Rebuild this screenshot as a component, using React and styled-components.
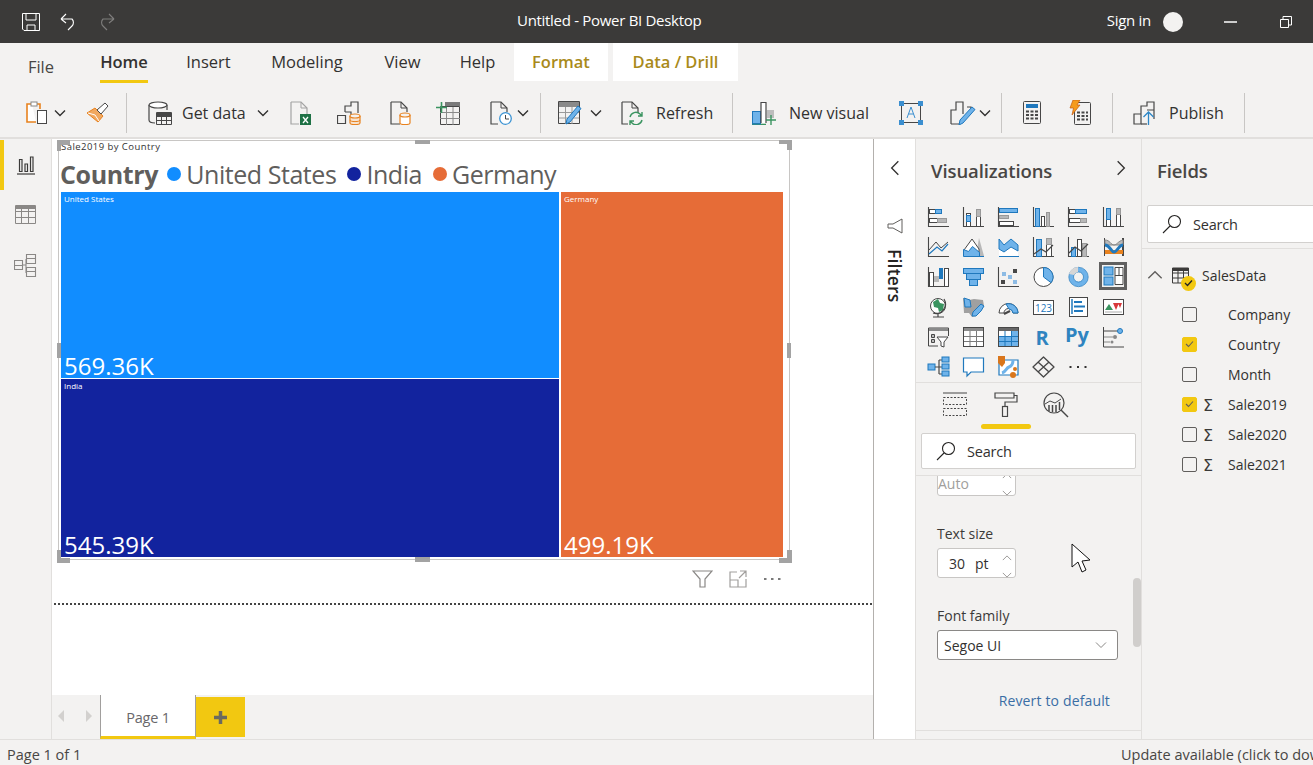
import React from 'react';
import styled, { createGlobalStyle } from 'styled-components';

const D = '#474747';
const B = '#1f78bd';
const L = '#6fb3ea';
const G = '#b8b8b8';
const O = '#e8821e';
const font = '"Open Sans", "Noto Sans", sans-serif';

const GlobalStyle = createGlobalStyle`
	html, body { margin: 0; padding: 0; background: #fff; overflow: hidden; }
	body { font-family: ${font}; color: #252423; }
	* { box-sizing: border-box; }
`;

const Page = styled.div`
	width: 1313px;
	height: 765px;
	display: flex;
	flex-direction: column;
	overflow: hidden;
`;

const TitleBar = styled.header`
	height: 43px;
	flex: none;
	background: #3b3a39;
	display: flex;
	align-items: center;
	color: #fff;
	font-size: 15px;
	letter-spacing: -0.3px;
`;
const QuickIcons = styled.div`
	width: 517px;
	padding-left: 22px;
	display: flex;
	align-items: center;
	gap: 20px;
`;
const TitleText = styled.span`
	padding-bottom: 3px;
`;
const SignIn = styled(TitleText)`
	margin-left: auto;
`;
const Avatar = styled.span`
	width: 20px;
	height: 20px;
	border-radius: 50%;
	background: #f3f2f1;
	margin-left: 12px;
`;
const WindowControls = styled.div`
	display: flex;
	align-items: center;
	gap: 43px;
	margin: 0 21px 0 41px;
`;

const TabRow = styled.nav`
	height: 40px;
	flex: none;
	background: #f3f2f1;
	display: flex;
	align-items: flex-start;
	padding-left: 28px;
	font-size: 16.5px;
`;
const Tab = styled.div`
	width: ${p => p.$w}px;
	margin-left: ${p => p.$ml}px;
	height: ${p => (p.$active ? 40 : 38)}px;
	padding-top: ${p => (p.$low ? 11 : 6)}px;
	display: flex;
	justify-content: center;
	white-space: nowrap;
	line-height: 26px;
	color: ${p => (p.$contextual ? '#a98a1a' : p.$low ? '#484644' : '#323130')};
	font-weight: ${p => (p.$contextual || p.$active ? 600 : 400)};
	background: ${p => (p.$contextual ? '#fff' : 'transparent')};
	border-bottom: ${p => (p.$active ? '3px solid #f2c811' : 'none')};
`;

const Ribbon = styled.div`
	height: 56px;
	flex: none;
	background: #f3f2f1;
	border-bottom: 2px solid #e1dfdd;
	display: flex;
	align-items: center;
	padding: 5px 0 0 26px;
`;
const Slot = styled.span`
	display: flex;
	flex: none;
	margin-left: ${p => p.$ml || 0}px;
`;
const RibbonLabel = styled.span`
	flex: none;
	width: ${p => p.$w}px;
	margin-left: ${p => p.$ml}px;
	white-space: nowrap;
	font-size: 16px;
	color: #323130;
`;
const Separator = styled.span`
	flex: none;
	width: 1px;
	height: 40px;
	margin-left: ${p => p.$ml}px;
	background: #c8c6c4;
`;

const Main = styled.main`
	flex: 1;
	display: flex;
	min-height: 0;
`;

const Rail = styled.aside`
	width: 52px;
	flex: none;
	padding-top: 1px;
	background: #f3f2f1;
	border-right: 1px solid #e1dfdd;
`;
const RailItem = styled.div`
	height: 50px;
	display: flex;
	align-items: center;
	justify-content: center;
	box-shadow: ${p => (p.$active ? 'inset 4px 0 0 #f2c811' : 'none')};
`;

const Center = styled.section`
	width: 821px;
	flex: none;
	display: flex;
	flex-direction: column;
`;
const Canvas = styled.div`
	flex: 1;
	background: #fff;
	padding: 1px 0 0 6px;
`;
const VisualFrame = styled.div`
	position: relative;
	width: 732px;
	height: 420px;
	border: 1px solid #c8c6c4;
	padding: 0 6px 2px 2px;
	display: flex;
	flex-direction: column;
`;
const VisualTitle = styled.div`
	height: 12px;
	font-size: 9.5px;
	line-height: 12px;
	color: #333;
	letter-spacing: 0.45px;
`;
const Legend = styled.div`
	height: 39px;
	padding-top: 3px;
	display: flex;
	align-items: center;
	color: #605e5c;
	font-size: 25px;
	letter-spacing: -0.45px;
	white-space: nowrap;
`;
const LegendTitle = styled.b`
	font-weight: 700;
	margin-right: 9px;
	margin-left: -1px;
	letter-spacing: -0.35px;
`;
const LegendDot = styled.i`
	width: 14px;
	height: 14px;
	border-radius: 50%;
	background: ${p => p.$color};
	margin-right: 5px;
`;
const LegendName = styled.span`
	margin-right: 11px;
`;
const Treemap = styled.div`
	flex: 1;
	display: grid;
	grid-template-columns: 498px 222px;
	grid-template-rows: 186px 178px;
	column-gap: 2px;
	row-gap: 1px;
`;
const Cell = styled.div`
	grid-column: ${p => p.$col};
	grid-row: ${p => p.$row};
	background: ${p => p.$color};
	color: #fff;
	padding: 2px 3px 0;
	display: flex;
	flex-direction: column;
	justify-content: space-between;
`;
const CellName = styled.span`
	font-size: 8px;
	line-height: 10px;
`;
const CellValue = styled.span`
	font-size: 24px;
	line-height: 24px;
`;
const Handle = styled.span`
	position: absolute;
	background: #a3a3a3;
	width: ${p => p.$w}px;
	height: ${p => p.$h}px;
	left: ${p => p.$x}px;
	top: ${p => p.$y}px;
`;
const VisualActions = styled.div`
	width: 724px;
	height: 18px;
	margin-top: 10px;
	display: flex;
	align-items: center;
	justify-content: flex-end;
	gap: 16px;
`;
const DottedLine = styled.div`
	margin: 15px 0 0 -4px;
	width: 818px;
	border-top: 2px dotted #444;
`;

const PageBar = styled.div`
	height: 44px;
	flex: none;
	background: #f3f2f1;
	display: flex;
	align-items: flex-start;
`;
const PageArrows = styled.div`
	width: 48px;
	flex: none;
	display: flex;
	gap: 22px;
	padding: 15px 0 0 6px;
`;
const PageTab = styled.div`
	width: 96px;
	height: 44px;
	background: #fff;
	border-left: 1px solid #a19f9d;
	border-right: 1px solid #a19f9d;
	border-bottom: 3px solid #f2c811;
	text-align: center;
	font-size: 14.5px;
	letter-spacing: -0.2px;
	line-height: 45px;
	color: #69676a;
`;
const AddPage = styled.div`
	width: 49px;
	height: 40px;
	margin-top: 2px;
	background: #f2c811;
	display: flex;
	align-items: center;
	justify-content: center;
`;

const FilterStrip = styled.aside`
	width: 42px;
	flex: none;
	background: #fff;
	border-left: 1px solid #b3b0ad;
	display: flex;
	flex-direction: column;
	align-items: center;
	padding-top: 21px;
`;
const FilterFunnel = styled.span`
	display: flex;
	margin-top: 42px;
`;
const FilterLabel = styled.span`
	writing-mode: vertical-rl;
	font-weight: 600;
	font-size: 17.5px;
	line-height: 18px;
	letter-spacing: 0.2px;
	margin-top: 15px;
	color: #252423;
`;

const VizPanel = styled.section`
	width: 227px;
	flex: none;
	background: #f3f2f1;
	border-left: 1px solid #e1dfdd;
	border-right: 1px solid #e1dfdd;
	display: flex;
	flex-direction: column;
	position: relative;
`;
const PanelHead = styled.div`
	height: 68px;
	flex: none;
	padding: 18px 12px 0 15px;
	display: flex;
	justify-content: space-between;
	align-items: flex-start;
	font-size: 18.5px;
	line-height: 28px;
	letter-spacing: -0.1px;
	font-weight: 600;
	color: #484644;
`;
const HeadChevron = styled.span`
	display: flex;
	margin-top: 3px;
`;
const VizGrid = styled.div`
	display: grid;
	grid-template-columns: repeat(6, 35px);
	grid-auto-rows: 20px;
	row-gap: 10px;
	padding-left: 12px;
	height: 176px;
	border-bottom: 1px solid #e1dfdd;
`;
const PaneTabs = styled.div`
	height: 50px;
	flex: none;
	display: flex;
	align-items: flex-start;
	padding: 9px 0 0 26px;
	position: relative;
`;
const PaneTab = styled.div`
	width: ${p => p.$w}px;
	margin-left: ${p => p.$ml || 0}px;
	display: flex;
	justify-content: center;
`;
const PaneUnderline = styled.span`
	position: absolute;
	left: 65px;
	top: 41px;
	width: 50px;
	height: 5px;
	border-radius: 3px;
	background: #f2c811;
`;
const SearchBox = styled.div`
	height: ${p => p.$h}px;
	width: ${p => p.$w}px;
	margin-left: ${p => p.$ml}px;
	flex: none;
	background: #fff;
	border: 1px solid #d2d0ce;
	border-radius: 2px;
	display: flex;
	align-items: center;
	padding-left: 14px;
	gap: 11px;
	font-size: 14.5px;
	letter-spacing: -0.2px;
	color: #323130;
`;
const FormatBody = styled.div`
	flex: 1;
	margin-top: 6px;
	border-top: 1px solid #e1dfdd;
	overflow: hidden;
`;
const FormatSection = styled.div`
	padding: 0 0 0 21px;
	height: 265px;
	border-bottom: 1px solid #e1dfdd;
`;
const Spinner = styled.div`
	width: 79px;
	height: 30px;
	margin-top: ${p => p.$mt}px;
	background: #fff;
	border: 1px solid #c8c6c4;
	border-radius: 3px;
	display: flex;
	align-items: center;
	position: relative;
	font-size: 14px;
	padding-left: ${p => (p.$muted ? 0 : 11)}px;
	padding-top: ${p => (p.$muted ? 5 : 0)}px;
	color: ${p => (p.$muted ? '#a19f9d' : '#323130')};
	gap: 10px;
`;
const SpinArrows = styled.span`
	position: absolute;
	right: 3px;
	top: 4px;
	display: flex;
	flex-direction: column;
	gap: 7px;
`;
const FieldLabel = styled.div`
	height: 20px;
	margin-top: 28px;
	font-size: 14px;
	line-height: 20px;
	color: #3b3a39;
`;
const SelectBox = styled.div`
	width: 181px;
	height: 30px;
	margin-top: 4px;
	background: #fff;
	border: 1px solid #8a8886;
	border-radius: 3px;
	display: flex;
	align-items: center;
	justify-content: space-between;
	padding: 0 10px 0 6px;
	font-size: 14px;
	color: #323130;
`;
const RevertLink = styled.div`
	width: 173px;
	height: 20px;
	margin-top: 31px;
	text-align: right;
	font-size: 14px;
	line-height: 20px;
	letter-spacing: 0.15px;
	color: #3a6ea5;
`;
const ScrollThumb = styled.span`
	position: absolute;
	left: 217px;
	top: 439px;
	width: 8px;
	height: 69px;
	border-radius: 4px;
	background: #d0cecc;
`;
const PointerIcon = styled.svg`
	position: absolute;
	left: 155px;
	top: 404px;
`;

const FieldsPanel = styled.section`
	flex: 1;
	min-width: 0;
	background: #f3f2f1;
	overflow: hidden;
	display: flex;
	flex-direction: column;
`;
const FieldsHead = styled(PanelHead)`
	padding-left: 15px;
	height: 66px;
`;
const FieldsRule = styled.div`
	margin-top: 5px;
	border-top: 1px solid #e1dfdd;
`;
const TableRow = styled.div`
	height: 30px;
	margin: 11px 0 9px;
	display: flex;
	align-items: center;
	padding-left: 5px;
	font-size: 14px;
	color: #323130;
`;
const TableBadge = styled.span`
	position: relative;
	display: flex;
	margin: 0 13px 0 9px;
`;
const TableTick = styled.span`
	position: absolute;
	left: 9px;
	top: 9px;
	width: 15px;
	height: 15px;
	border-radius: 50%;
	background: #f2c811;
	display: flex;
	align-items: center;
	justify-content: center;
`;
const FieldRow = styled.div`
	height: 30px;
	display: flex;
	align-items: center;
	padding-left: 40px;
	font-size: 14px;
	color: #323130;
`;
const Check = styled.span`
	width: 15px;
	height: 15px;
	flex: none;
	border-radius: 2px;
	border: 1px solid ${p => (p.$on ? '#f2c811' : '#605e5c')};
	background: ${p => (p.$on ? '#f2c811' : 'transparent')};
	display: flex;
	align-items: center;
	justify-content: center;
`;
const SigmaSlot = styled.span`
	width: 31px;
	padding: 3px 0 0 6px;
	flex: none;
	font-size: 16px;
	font-family: "DejaVu Sans", sans-serif;
	color: #3b3a39;
`;

const StatusBar = styled.footer`
	height: 26px;
	flex: none;
	background: #f3f2f1;
	border-top: 1px solid #e1dfdd;
	padding-top: 3px;
	display: flex;
	align-items: center;
	font-size: 14.5px;
	color: #484644;
	white-space: nowrap;
`;
const StatusLeft = styled.span`
	width: 1121px;
	flex: none;
	padding-left: 7px;
`;

const Chevron = ({ dir = 'down', size = 12, color = '#323130', w = 1.4 }) => {
	const paths = {
		down: 'M1 3.5 6 8.5 11 3.5',
		up: 'M1 8.5 6 3.5 11 8.5',
		left: 'M8.5 1 3.5 6 8.5 11',
		right: 'M3.5 1 8.5 6 3.5 11',
	};
	return (
		<svg width={size} height={size} viewBox="0 0 12 12" fill="none">
			<path d={paths[dir]} stroke={color} strokeWidth={w} />
		</svg>
	);
};

const Magnifier = () =>
	<svg width="20" height="20" viewBox="0 0 20 20" fill="none" stroke="#252423" strokeWidth="1.1">
		<circle cx="12.5" cy="7.5" r="6" />
		<path d="M8 12 1 19" />
	</svg>;

const Svg = ({ w, h, children }) =>
	<svg width={w} height={h} viewBox={`0 0 ${w} ${h}`} fill="none">
		{children}
	</svg>;

// ribbon drawings, each one in its own pixel box
const ribbon = {
	clipboard:
		<Svg w={21} h={23}>
			<path d="M6 3H1v18h9" stroke={O} strokeWidth="1.6" fill="#fff" />
			<path d="M14 8V3H9" stroke={O} strokeWidth="1.6" />
			<rect x="5" y="1" width="6" height="4" fill="#fff" stroke="#888" />
			<rect x="11.5" y="9.5" width="9" height="13" fill="#fff" stroke={D} />
		</Svg>,
	brush:
		<Svg w={23} h={21}>
			<path d="M1 11 9 6l8 8-5 6Z" fill="#f0a860" stroke={O} />
			<path d="M2 11l7 2 4 6" stroke="#fff" />
			<path d="m11 8 8-7 3 3-7 8Z" fill="#fff" stroke={D} />
		</Svg>,
	database:
		<Svg w={25} h={24}>
			<path d="M1 4v15c0 2 3 3 6 3M19 4v5" stroke={D} strokeWidth="1.2" />
			<ellipse cx="10" cy="4" rx="9" ry="3" stroke={D} strokeWidth="1.2" fill="#fff" />
			<path d="M8.5 11.5h15v12h-15Zm0 4h15m-15 4h15m-10-8v12m5-12v12" stroke={D} fill="#f3f2f1" />
			<rect x="9" y="12" width="14" height="3" fill={D} />
		</Svg>,
	excel:
		<Svg w={21} h={24}>
			<path d="M1 1h10l6 6v11M1 1v22h8" stroke="#a3a3a3" strokeWidth="1.2" />
			<path d="M11 1v6h6" stroke="#a3a3a3" />
			<rect x="10" y="13" width="11" height="11" fill="#1e7145" />
			<path d="m13 16 5 6m0-6-5 6" stroke="#fff" strokeWidth="1.3" />
		</Svg>,
	datasets:
		<Svg w={24} h={24}>
			<path d="M8 11V5h6V1h7v11M.5 14.5h8v8h-8Z" stroke={D} strokeWidth="1.2" fill="#f3f2f1" />
			<path d="M8 11h6v3" stroke={D} strokeWidth="1.2" />
			<path d="M13 15v7c0 1 2 1.6 5 1.6s5-.6 5-1.6v-7" stroke={O} strokeWidth="1.2" fill="#f8e3cf" />
			<ellipse cx="18" cy="15" rx="5" ry="2" stroke={O} strokeWidth="1.2" fill="#f3f2f1" />
			<path d="M13 19c0 1 2 1.6 5 1.6s5-.6 5-1.6" stroke={O} />
		</Svg>,
	docCylinder:
		<Svg w={21} h={24}>
			<path d="M1 1h10l6 6v4M1 1v22h9" stroke={D} strokeWidth="1.2" />
			<path d="M11 1v6h6" stroke={D} />
			<path d="M10 14v8c0 1 2 1.6 5 1.6s5-.6 5-1.6v-8" stroke={O} strokeWidth="1.2" fill="#fff" />
			<ellipse cx="15" cy="14" rx="5" ry="2" stroke={O} strokeWidth="1.2" fill="#f3f2f1" />
		</Svg>,
	tablePlus:
		<Svg w={24} h={24}>
			<path d="M4.500 5.500h19v18h-19Z" stroke={D} fill="#f3f2f1" />
			<path d="M9 1h15v4H9Z" fill="#7a7a7a" />
			<path d="M4 11.500h20M4 17.500h20M10.500 6v18M17 6v18" stroke="#8a8a8a" />
			<path d="M0 6.500h11M5.500 1v11" stroke="#3a9460" strokeWidth="1.6" />
		</Svg>,
	docClock:
		<Svg w={22} h={24}>
			<path d="M1 1h10l6 6v4M1 1v22h7" stroke={D} strokeWidth="1.2" />
			<path d="M11 1v6h6" stroke={D} />
			<circle cx="15.500" cy="17.500" r="5.800" stroke="#3b93d3" strokeWidth="1.3" fill="#fff" />
			<path d="M15.500 14v4h3.500" stroke={D} />
		</Svg>,
	tablePencil:
		<Svg w={24} h={24}>
			<path d="M.5.500h21v22H.5Z" stroke={D} fill="#f3f2f1" />
			<rect x="1" y="1" width="20" height="5" fill="#8a8a8a" />
			<path d="M1 11.500h20M1 17h20M7.500 6v17M14 6v17" stroke="#9a9a9a" />
			<path d="m8 23 1-5L20 5l3 2.500L12 21Z" fill="#6fb3ea" stroke="#1f78bd" />
		</Svg>,
	docRefresh:
		<Svg w={23} h={24}>
			<path d="M1 1h10l6 6v5M1 1v22h6" stroke={D} strokeWidth="1.2" />
			<path d="M11 1v6h6" stroke={D} />
			<path d="M9 16a6 6 0 0 1 10-3l2 2m0-4v4h-4" stroke="#3a9460" strokeWidth="1.4" />
			<path d="M21 19a6 6 0 0 1-10 3l-2-2m0 4v-4h4" stroke="#3a9460" strokeWidth="1.4" />
		</Svg>,
	newVisual:
		<Svg w={25} h={24}>
			<rect x=".5" y="10.500" width="8" height="12" fill="#6fb3ea" stroke="#1f78bd" />
			<path d="M9 22V1.500h5V22" stroke={D} strokeWidth="1.2" fill="#fff" />
			<rect x="15" y="9" width="7" height="8" fill="#bdbdbd" />
			<path d="M0 23.500h14M19 14v10M14 19h10" stroke="#3a9460" strokeWidth="1.4" />
			<path d="M0 23h9" stroke="#1f78bd" />
		</Svg>,
	textBox:
		<Svg w={24} h={24}>
			<rect x="2.500" y="2.500" width="19" height="19" stroke={D} fill="#f3f2f1" />
			<rect x="0" y="0" width="5" height="5" fill="#3b8fd0" />
			<rect x="19" y="0" width="5" height="5" fill="#3b8fd0" />
			<rect x="0" y="19" width="5" height="5" fill="#3b8fd0" />
			<rect x="19" y="19" width="5" height="5" fill="#3b8fd0" />
			<path d="m8 17 4-11 4 11M9.500 13h5" stroke="#3b8fd0" />
		</Svg>,
	pencilBars:
		<Svg w={28} h={24}>
			<path d="M1 23V9h5V1h7v12M17 6h4v3" stroke={D} strokeWidth="1.2" />
			<path d="M1 23h9" stroke={D} />
			<path d="m9 24 1-5L22 6l3 2.500L13 22Z" fill="#6fb3ea" stroke="#1f78bd" />
		</Svg>,
	calc:
		<Svg w={18} h={23}>
			<rect x=".5" y=".5" width="17" height="22" rx="1" stroke={D} fill="#f3f2f1" />
			<rect x="3" y="3" width="12" height="4" fill="#1f78bd" />
			<path d="M3 10.500h12M3 14h12M3 17.500h12" stroke={D} strokeWidth="2" strokeDasharray="3 1.500" />
		</Svg>,
	flashCalc:
		<Svg w={22} h={25}>
			<rect x="5.500" y="2.500" width="16" height="22" rx="1" stroke={D} fill="#f3f2f1" />
			<path d="M8 12.500h11M8 16h11M8 19.500h11" stroke={D} strokeWidth="2" strokeDasharray="3 1.500" />
			<path d="M4 0h7L8 5h3L3 15l1.500-7H1Z" fill="#f59b1e" stroke="#c75a10" strokeWidth=".7" />
		</Svg>,
	publish:
		<Svg w={24} h={24}>
			<path d="M1 13h7v10H1ZM8 13V5h6V1h7v17M21 9h-7" stroke={D} strokeWidth="1.2" />
			<path d="M8 23h6" stroke={D} strokeWidth="1.2" />
			<path d="M15.500 24V11m-5 5 5-5 5 5" stroke="#2d86c6" strokeWidth="1.3" />
		</Svg>,
};

const axes = <path d="M.5 0v19.500H21" stroke={D} strokeWidth="1.1" />;
const box = (x, y, w, h, fill, stroke = D) =>
	<rect x={x + 0.5} y={y + 0.5} width={w} height={h} fill={fill} stroke={stroke} />;

// the 35 visual types, 21x20 each, row by row
const vizIcons = [
	<g>{axes}{box(1, 2, 6, 4, '#fff')}{box(7, 2, 6, 4, L, B)}{box(1, 11, 8, 4, '#fff')}{box(9, 11, 9, 4, G, '#999')}</g>,
	<g>{axes}{box(3, 6, 4, 13, '#fff')}{box(3, 8, 4, 6, L, B)}{box(13, 2, 4, 17, '#fff')}{box(13, 2, 4, 7, G, '#999')}</g>,
	<g>{axes}{box(1, 1, 18, 4, L, B)}{box(1, 8, 9, 3, G, '#999')}{box(1, 14, 14, 4, '#fff')}</g>,
	<g>{axes}{box(2, 1, 4, 18, L, B)}{box(8, 9, 3, 10, '#fff')}{box(13, 5, 3, 14, G, '#999')}</g>,
	<g>{axes}{box(1, 2, 6, 4, '#fff')}{box(7, 2, 11, 4, L, B)}{box(1, 11, 11, 4, '#fff')}{box(12, 11, 6, 4, G, '#999')}</g>,
	<g>{axes}{box(3, 1, 4, 18, '#fff')}{box(3, 1, 4, 11, L, B)}{box(13, 1, 4, 18, '#fff')}{box(13, 1, 4, 6, G, '#999')}</g>,

	<g>{axes}<path d="m1 17 8-7 5 4 6-7" stroke={B} strokeWidth="1.2" /><path d="m1 13 7-8 5 6 7-6" stroke={D} /></g>,
	<g><path d="M13 19 16 1l5 18Z" fill={G} /><path d="M1 13 9 2l7 10v7H1Z" fill="#fff" stroke={D} /><path d="M.5 19.500v-7l5 2 4-5 7 6v4Z" fill={L} stroke={B} /><path d="M16 19.500h5" stroke={B} /></g>,
	<g><path d="M1 3l6 6 6-6 7 5v11H1Z" fill="#fff" /><path d="M1 2l5 6 7-6 7 6v6l-7-4-7 5-5-3Z" fill={L} stroke={B} /><path d="M1 19.500h20" stroke={B} /></g>,
	<g>{axes}{box(3, 2, 5, 17, L, B)}{box(13, 1, 5, 18, '#fff')}{box(13, 1, 5, 6, G, '#999')}<path d="m1 17 7-5 5 3 7-7" stroke={D} strokeWidth="1.2" /></g>,
	<g>{axes}{box(3, 10, 4, 9, L, B)}{box(9, 2, 4, 17, '#fff')}{box(14, 6, 4, 13, G, '#999')}<path d="m1 16 6-6 6 4 7-7" stroke={D} strokeWidth="1.2" /></g>,
	<g><path d="M1 1h1v18H1zm18 0h2v18h-2z" fill={D} /><path d="M2 3c5 0 6 5 9 5s4-4 9-5v5H2Z" fill={G} stroke="#888" /><path d="M2 13h18v4H2Z" fill={O} /><path d="M2 8c5 0 6 7 9 7s5-7 9-7" stroke={B} strokeWidth="3" /></g>,

	<g>{axes}{box(1, 5, 4, 14, '#fff')}<rect x="6" y="9" width="5" height="6" fill={G} /><rect x="11" y="1" width="4" height="11" fill={B} />{box(16, 1, 4, 18, '#fff')}</g>,
	<g>{box(0, 1, 20, 5, L, B)}{box(3, 6, 14, 6, L, B)}{box(6, 12, 8, 6, L, B)}</g>,
	<g>{axes}<rect x="15" y="2" width="4" height="4" fill={D} /><rect x="3" y="13" width="4" height="4" fill={D} /><rect x="4" y="5" width="4" height="4" fill="#8dbbe4" /><rect x="10" y="8" width="4" height="4" fill="#8dbbe4" /><rect x="15" y="13" width="4" height="4" fill="#8dbbe4" /></g>,
	<g><circle cx="10.500" cy="10" r="9.500" fill="#fff" stroke={D} /><path d="M10.500.500a9.500 9.500 0 0 1 7.600 15.200L10.500 10Z" fill={L} stroke={B} /></g>,
	<g><circle cx="10.500" cy="10" r="7.300" stroke={L} strokeWidth="4.500" /><circle cx="10.500" cy="10" r="9.700" stroke={B} strokeWidth=".7" /><circle cx="10.500" cy="10" r="5" stroke={B} strokeWidth=".7" /><path d="M10 0A10 10 0 0 0 1 7l5 1a5 5 0 0 1 4-3Z" fill="#d6d6d6" /></g>,
	<g><rect x="-2.500" y="-3.500" width="25" height="25" fill="#f3f2f1" stroke="#606060" strokeWidth="3" /><rect x="1" y="0" width="9" height="8" fill={L} stroke={B} /><rect x="1" y="10" width="9" height="8" fill={L} stroke={B} /><path d="M12 .5h8v17h-8Zm0 8h8m-4-8v8" stroke={D} fill="#fff" /></g>,

	<g><circle cx="10" cy="9" r="7.500" fill="#fff" stroke={D} /><path d="M5 5l5-3 2 4 4 1-1 6-4 2-1-4-4-1Z" fill="#3a9460" /><path d="M16 2a9.500 9.500 0 0 1-11 14M10 17v3M5 20h11" stroke={D} strokeWidth="1.2" /></g>,
	<g><path d="M0 1l6 2 5-1 9 1 1 6-3 5-5 5-4 1-3-4H1Z" fill="#a0a0a0" /><path d="M1 1l6 2 1 7H2Zm12 11 5-5 3 2-3 5-5 5-4 0 1-4Z" fill={L} stroke={B} /></g>,
	<g><path d="M1 16a9.500 9.500 0 0 1 19 0h-5a4.500 4.500 0 0 0-9 0Z" fill="#fff" stroke={D} /><path d="M8 7a9.500 9.500 0 0 1 12 9h-5a4.500 4.500 0 0 0-4-4Z" fill={L} stroke={B} /><path d="m6 17 6-3" stroke={D} strokeWidth="2" /></g>,
	<g>{box(0, 3, 20, 14, '#fff', D)}<text x="10.500" y="14.500" textAnchor="middle" fontSize="10" fontFamily="Open Sans" fill={B}>123</text></g>,
	<g>{box(1, 0, 18, 19, '#fff', D)}<path d="M4 2v15" stroke={B} strokeWidth="1.500" /><path d="M6 5h8M6 9.500h11M6 14h9" stroke={B} strokeWidth="2" /></g>,
	<g>{box(0, 2, 20, 15, '#fff', D)}<path d="m2 13 4-6 4 6Z" fill="#3a9460" /><path d="m10 6 6 0-3 7Zm5 0h4l-2 5Z" fill="#d8393b" /><path d="M2 15h17" stroke="#aaa" /></g>,

	<g><path d="M.500 19V1h20v8" stroke={D} /><path d="M.500 19H10" stroke={D} /><rect x="1" y="1" width="19" height="3" fill="#8a8a8a" /><path d="M3.500 7.500h3v3h-3Zm0 5h3v3h-3Z" stroke={D} fill="#bbb" /><path d="M9 10h11l-4 5v5l-3-1v-4Z" fill="#fff" stroke={D} /></g>,
	<g>{box(0, 0, 20, 19, '#fff', D)}<rect x="1" y="1" width="19" height="3" fill="#8a8a8a" /><path d="M1 9.500h19M1 14.500h19M7 4v15M13.500 4v15" stroke="#7a7a7a" /></g>,
	<g>{box(0, 0, 20, 19, '#fff', D)}<rect x="1" y="1" width="19" height="3" fill="#666" /><rect x="13" y="4" width="7" height="15" fill={L} /><rect x="1" y="10" width="19" height="9" fill={L} /><path d="M1 9.500h19M1 14.500h19M7 4v15M13.500 4v15" stroke={B} /></g>,
	<text x="9" y="18" textAnchor="middle" fontSize="20" fontWeight="700" fontFamily="Open Sans" fill="#2f84c0">R</text>,
	<text x="9" y="15" textAnchor="middle" fontSize="20" fontWeight="700" fontFamily="Open Sans" fill="#2f84c0">Py</text>,
	<g><path d="M.500 0v20H21" stroke={D} /><path d="M1 4h14" stroke={D} /><circle cx="17" cy="4" r="2.500" fill={L} stroke={B} /><path d="M1 10h9M1 15h6" stroke="#888" strokeWidth="1.200" /><circle cx="12" cy="10" r="2" fill="#888" /><circle cx="9" cy="15" r="1.500" fill="#888" /></g>,

	<g><rect x="0" y="7" width="7" height="6" fill={L} stroke={B} /><path d="M7 10h4M11 3v14M11 3h3M11 10h3M11 17h3" stroke={D} strokeWidth="1.200" /><rect x="14" y="0" width="7" height="5" fill={L} stroke={B} /><rect x="14" y="7" width="7" height="5" fill={L} stroke={B} /><rect x="14" y="14" width="7" height="5" fill={L} stroke={B} /></g>,
	<path d="M.500 1h20v14H8l-4 4v-4H.500Z" fill="#fff" stroke={B} strokeWidth="1.200" />,
	<g><path d="M1 3h19v15H1Z" fill="#fff" stroke={B} strokeWidth="1.200" /><path d="M4 16c4-1 4-5 7-6s4-3 4-7" stroke={L} strokeWidth="3" /><path d="M0-1h7v7l-3 4-4-4Z" fill="#d9761c" /><circle cx="17" cy="12" r="2" fill="#d9761c" /><circle cx="15" cy="18" r="3" fill="#d9761c" /></g>,
	<path d="M10.500 0 21 10 10.500 20 0 10ZM5 5l11 10M16 5 5 15" stroke={D} strokeWidth="1.300" strokeLinejoin="round" />,
	<path d="M1.500 10h2M9 10h2M16.500 10h2" stroke="#323130" strokeWidth="2" />,
];

const RailReport = () =>
	<Svg w={20} h={20}>
		<path d="M1 19h18" stroke="#3b3a39" strokeWidth="1.200" />
		<path d="M3.500 4.500h2.500v12H3.500ZM9 9h2.500v7.500H9ZM14.500 2h2.500v14.500h-2.500Z" stroke="#3b3a39" strokeWidth="1.200" />
	</Svg>;
const RailTable = () =>
	<Svg w={21} h={20}>
		<path d="M.5.500h20v18H.5Zm0 6h20m-20 6h20m-14-12v18m7-18v18" stroke="#8a8886" />
		<rect x="1" y="1" width="19" height="3" fill="#8a8886" />
	</Svg>;
const RailModel = () =>
	<Svg w={23} h={23}>
		<path d="M.5 6.500h8v9h-8Zm12-6h9v9h-9Zm0 13h9v9h-9ZM8 11h4M12 5v14m-12-7.500h8m5-7h9m-9 13h9" stroke="#8a8886" strokeWidth="1.100" />
	</Svg>;

const App = () =>
	<Page>
		<GlobalStyle />
		<TitleBar>
			<QuickIcons>
				<Svg w={18} h={18}>
					<path d="M.5.5h17v17H2L.5 16ZM4 1v6h10V1M5 17v-5h8v5" stroke="#fff" />
				</Svg>
				<Svg w={18} h={18}>
					<path d="M1 6h11a5 5 0 0 1 0 7l-4 4M1 6l5-5M1 6l5 4" stroke="#fff" strokeWidth="1.100" />
				</Svg>
				<Svg w={17} h={18}>
					<path d="M16 6H5a5 5 0 0 0 0 7l4 4m7-11-5-5m5 5-5 4" stroke="#7f7e7d" strokeWidth="1.100" />
				</Svg>
			</QuickIcons>
			<TitleText>Untitled - Power BI Desktop</TitleText>
			<SignIn>Sign in</SignIn>
			<Avatar />
			<WindowControls>
				<Svg w={13} h={2}><path d="M0 1h13" stroke="#fff" strokeWidth="1.500" /></Svg>
				<Svg w={12} h={12}><path d="M.5 3.500h8v8h-8ZM3 3V.5h8.500V9H9" stroke="#fff" /></Svg>
			</WindowControls>
		</TitleBar>

		<TabRow>
			<Tab $w={26} $ml={0} $low>File</Tab>
			<Tab $w={48} $ml={46} $active>Home</Tab>
			<Tab $w={43} $ml={39}>Insert</Tab>
			<Tab $w={74} $ml={40}>Modeling</Tab>
			<Tab $w={37} $ml={40}>View</Tab>
			<Tab $w={35} $ml={39}>Help</Tab>
			<Tab $w={94} $ml={19} $contextual>Format</Tab>
			<Tab $w={125} $ml={5} $contextual>Data / Drill</Tab>
		</TabRow>

		<Ribbon>
			<Slot>{ribbon.clipboard}</Slot>
			<Slot $ml={7}><Chevron /></Slot>
			<Slot $ml={20}>{ribbon.brush}</Slot>
			<Separator $ml={17} />
			<Slot $ml={21}>{ribbon.database}</Slot>
			<RibbonLabel $ml={9} $w={66}>Get data</RibbonLabel>
			<Slot $ml={9}><Chevron /></Slot>
			<Slot $ml={21}>{ribbon.excel}</Slot>
			<Slot $ml={26}>{ribbon.datasets}</Slot>
			<Slot $ml={29}>{ribbon.docCylinder}</Slot>
			<Slot $ml={25}>{ribbon.tablePlus}</Slot>
			<Slot $ml={30}>{ribbon.docClock}</Slot>
			<Slot $ml={5}><Chevron /></Slot>
			<Separator $ml={11} />
			<Slot $ml={17}>{ribbon.tablePencil}</Slot>
			<Slot $ml={8}><Chevron /></Slot>
			<Slot $ml={19}>{ribbon.docRefresh}</Slot>
			<RibbonLabel $ml={12} $w={56}>Refresh</RibbonLabel>
			<Separator $ml={20} />
			<Slot $ml={19}>{ribbon.newVisual}</Slot>
			<RibbonLabel $ml={12} $w={81}>New visual</RibbonLabel>
			<Slot $ml={29}>{ribbon.textBox}</Slot>
			<Slot $ml={27}>{ribbon.pencilBars}</Slot>
			<Slot $ml={1}><Chevron /></Slot>
			<Separator $ml={10} />
			<Slot $ml={21}>{ribbon.calc}</Slot>
			<Slot $ml={28}>{ribbon.flashCalc}</Slot>
			<Separator $ml={21} />
			<Slot $ml={20}>{ribbon.publish}</Slot>
			<RibbonLabel $ml={12} $w={54}>Publish</RibbonLabel>
			<Separator $ml={21} />
		</Ribbon>

		<Main>
			<Rail>
				<RailItem $active><RailReport /></RailItem>
				<RailItem><RailTable /></RailItem>
				<RailItem><RailModel /></RailItem>
			</Rail>

			<Center>
				<Canvas>
					<VisualFrame>
						<VisualTitle>Sale2019 by Country</VisualTitle>
						<Legend>
							<LegendTitle>Country</LegendTitle>
							<LegendDot $color="#118dff" />
							<LegendName>United States</LegendName>
							<LegendDot $color="#12239e" />
							<LegendName>India</LegendName>
							<LegendDot $color="#e66c37" />
							<LegendName>Germany</LegendName>
						</Legend>
						<Treemap>
							<Cell $color="#118dff" $col="1" $row="1">
								<CellName>United States</CellName>
								<CellValue>569.36K</CellValue>
							</Cell>
							<Cell $color="#12239e" $col="1" $row="2">
								<CellName>India</CellName>
								<CellValue>545.39K</CellValue>
							</Cell>
							<Cell $color="#e66c37" $col="2" $row="1 / span 2">
								<CellName>Germany</CellName>
								<CellValue>499.19K</CellValue>
							</Cell>
						</Treemap>
						<Handle $x={-2} $y={-1} $w={13} $h={5} />
						<Handle $x={-2} $y={-1} $w={4} $h={11} />
						<Handle $x={720} $y={-1} $w={13} $h={4} />
						<Handle $x={728} $y={-1} $w={5} $h={10} />
						<Handle $x={-2} $y={409} $w={4} $h={13} />
						<Handle $x={-2} $y={417} $w={13} $h={5} />
						<Handle $x={728} $y={409} $w={5} $h={13} />
						<Handle $x={720} $y={417} $w={13} $h={5} />
						<Handle $x={356} $y={-1} $w={15} $h={4} />
						<Handle $x={356} $y={416} $w={15} $h={5} />
						<Handle $x={-2} $y={202} $w={4} $h={15} />
						<Handle $x={728} $y={202} $w={4} $h={15} />
					</VisualFrame>
					<VisualActions>
						<Svg w={21} h={18}>
							<path d="M1 1h19l-7 8v8H8V9Z" stroke="#8a8886" strokeWidth="1.200" />
						</Svg>
						<Svg w={18} h={18}>
							<path d="M8 2H1v15h16V9M1 10h8v7M11 1h6v6M17 1l-7 7" stroke="#a19f9d" strokeWidth="1.200" />
						</Svg>
						<Svg w={19} h={4}>
							<path d="M1 2h2.500M8 2h2.500M15 2h2.500" stroke="#7a7a7a" strokeWidth="2" />
						</Svg>
					</VisualActions>
					<DottedLine />
				</Canvas>
				<PageBar>
					<PageArrows>
						<Svg w={6} h={12}><path d="M6 0v12L0 6Z" fill="#d2d0ce" /></Svg>
						<Svg w={6} h={12}><path d="M0 0v12l6-6Z" fill="#d2d0ce" /></Svg>
					</PageArrows>
					<PageTab>Page 1</PageTab>
					<AddPage>
						<Svg w={15} h={15}>
							<path d="M7.500 1v13M1 7.500h13" stroke="#6b6a5f" strokeWidth="3.500" />
						</Svg>
					</AddPage>
				</PageBar>
			</Center>

			<FilterStrip>
				<Chevron dir="left" size={16} color="#323130" w={1} />
				<FilterFunnel>
					<Svg w={16} h={16}>
						<path d="M15 1 6 6H1v4h5l9 5Z" stroke="#605e5c" />
					</Svg>
				</FilterFunnel>
				<FilterLabel>Filters</FilterLabel>
			</FilterStrip>

			<VizPanel>
				<PanelHead>
					Visualizations
					<HeadChevron><Chevron dir="right" size={16} w={1} /></HeadChevron>
				</PanelHead>
				<VizGrid>
					{vizIcons.map((icon, index) =>
						<svg key={index} width="21" height="20" viewBox="0 0 21 20" fill="none" overflow="visible">
							{icon}
						</svg>,
					)}
				</VizGrid>
				<PaneTabs>
					<PaneTab $w={26}>
						<Svg w={26} h={25}>
							<path d="M1 1h24" stroke={D} />
							<path d="M1.500 5.500h23v7h-23Zm0 11h23v7h-23Z" stroke={D} strokeDasharray="2 1.500" />
						</Svg>
					</PaneTab>
					<PaneTab $w={50} $ml={13}>
						<Svg w={24} h={25}>
							<path d="M1 1h19v5H1ZM20 3.500h3V10H11v4" stroke={D} strokeWidth="1.200" />
							<rect x="8.500" y="14.500" width="5" height="10" stroke={D} strokeWidth="1.200" />
						</Svg>
					</PaneTab>
					<PaneTab $w={26} $ml={12}>
						<Svg w={26} h={26}>
							<circle cx="11" cy="11" r="10" stroke={D} strokeWidth="1.200" />
							<path d="M18 18l7 7" stroke={D} strokeWidth="1.400" />
							<path d="M2 12l5-3 5 2 6-4" stroke={D} />
							<path d="M6 13v6M9.500 13v7M13 13v7M16.500 10v8" stroke={D} strokeWidth="1.500" />
						</Svg>
					</PaneTab>
					<PaneUnderline />
				</PaneTabs>
				<SearchBox $w={215} $h={36} $ml={5}>
					<Magnifier />
					Search
				</SearchBox>
				<FormatBody>
					<FormatSection>
						<Spinner $mt={-10} $muted>
							Auto
							<SpinArrows>
								<Chevron dir="up" size={10} color="#8a8886" w={1} />
								<Chevron size={10} color="#8a8886" w={1} />
							</SpinArrows>
						</Spinner>
						<FieldLabel>Text size</FieldLabel>
						<Spinner $mt={4}>
							<span>30</span>
							<span>pt</span>
							<SpinArrows>
								<Chevron dir="up" size={10} color="#8a8886" w={1} />
								<Chevron size={10} color="#8a8886" w={1} />
							</SpinArrows>
						</Spinner>
						<FieldLabel>Font family</FieldLabel>
						<SelectBox>
							Segoe UI
							<Chevron size={12} color="#8a8886" w={1} />
						</SelectBox>
						<RevertLink>Revert to default</RevertLink>
					</FormatSection>
				</FormatBody>
				<ScrollThumb />
				<PointerIcon width="20" height="31" viewBox="0 0 20 31">
					<path d="M1 1v23l6-5 4 10 4-2-4-9 8-1Z" fill="#fff" stroke="#111" strokeWidth="1" />
				</PointerIcon>
			</VizPanel>

			<FieldsPanel>
				<FieldsHead>Fields</FieldsHead>
				<SearchBox $w={200} $h={38} $ml={5}>
					<Magnifier />
					Search
				</SearchBox>
				<FieldsRule />
				<TableRow>
					<Chevron dir="up" size={16} color="#605e5c" w={1} />
					<TableBadge>
						<Svg w={17} h={17}>
							<path d="M.5 1h16v15H.5Zm0 5h16m-16 5h16M6 1v15M11.500 1v15" stroke="#3b3a39" />
							<rect x="1" y="1" width="15" height="3" fill="#3b3a39" />
						</Svg>
						<TableTick>
							<Svg w={9} h={8}><path d="m1 4 2.500 2.500L8 1.500" stroke="#252423" strokeWidth="1.300" /></Svg>
						</TableTick>
					</TableBadge>
					SalesData
				</TableRow>
				{[
					{ name: 'Company' },
					{ name: 'Country', on: true },
					{ name: 'Month' },
					{ name: 'Sale2019', on: true, sum: true },
					{ name: 'Sale2020', sum: true },
					{ name: 'Sale2021', sum: true },
				].map(field =>
					<FieldRow key={field.name}>
						<Check $on={field.on}>
							{field.on &&
								<Svg w={9} h={8}><path d="m1 4 2.500 2.500L8 1.500" stroke="#605e5c" strokeWidth="1.100" /></Svg>}
						</Check>
						<SigmaSlot>{field.sum ? 'Σ' : ''}</SigmaSlot>
						{field.name}
					</FieldRow>,
				)}
			</FieldsPanel>
		</Main>

		<StatusBar>
			<StatusLeft>Page 1 of 1</StatusLeft>
			<span>Update available (click to download)</span>
		</StatusBar>
	</Page>;

export default App;
